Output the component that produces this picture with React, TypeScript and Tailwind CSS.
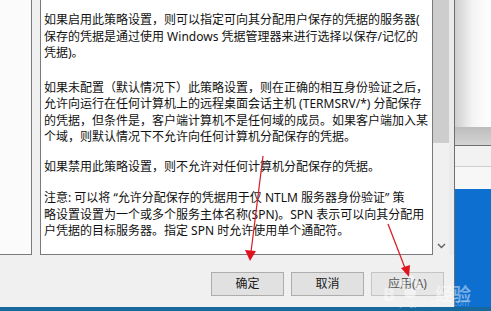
import React from 'react';

const paragraphs: { gap: number; lines: string[] }[] = [
  {
    gap: 12,
    lines: [
      '如果启用此策略设置，则可以指定可向其分配用户保存的凭据的服务器(',
      '保存的凭据是通过使用 Windows 凭据管理器来进行选择以保存/记忆的',
      '凭据)。',
    ],
  },
  {
    gap: 18,
    lines: [
      '如果未配置（默认情况下）此策略设置，则在正确的相互身份验证之后，',
      '允许向运行在任何计算机上的远程桌面会话主机 (TERMSRV/*) 分配保存',
      '的凭据，但条件是，客户端计算机不是任何域的成员。如果客户端加入某',
      '个域，则默认情况下不允许向任何计算机分配保存的凭据。',
    ],
  },
  {
    gap: 13,
    lines: ['如果禁用此策略设置，则不允许对任何计算机分配保存的凭据。'],
  },
  {
    gap: 15,
    lines: [
      '注意: 可以将 “允许分配保存的凭据用于仅 NTLM 服务器身份验证” 策',
      '略设置设置为一个或多个服务主体名称(SPN)。SPN 表示可以向其分配用',
      '户凭据的目标服务器。指定 SPN 时允许使用单个通配符。',
    ],
  },
];

function DialogButton({ label, disabled }: { label: string; disabled?: boolean }) {
  return (
    <button
      className={
        disabled
          ? 'w-[73px] h-[24px] border border-[#c4c4c4] bg-[#e6e6e6] text-[12px] text-[#555]'
          : 'w-[73px] h-[24px] border border-[#adadad] bg-[#e1e1e1] text-[12px] text-[#1a1a1a]'
      }
    >
      {label}
    </button>
  );
}

export default function App() {
  return (
    <div
      className="relative w-[491px] h-[311px] overflow-hidden flex flex-col bg-[#f0f0f0]"
      style={{ fontFamily: '"Noto Sans", "Noto Sans CJK SC", sans-serif' }}
    >
      <div className="flex h-[307px]">
        {/* property dialog */}
        <div className="w-[455px] flex flex-col bg-[#f0f0f0] border-r border-[#6e6e6e]">
          <div className="flex h-[255px]">
            <div className="w-[32px] bg-[#fbfbfb] border-r border-b border-[#7a7a7a]" />
            <div className="w-[8px]" />
            <div className="w-[393px] bg-white border-x border-b border-[#7a7a7a] pl-[3px] text-[12px] leading-[16.5px] text-[#111]">
              {paragraphs.map((p, i) => (
                <div key={i} style={{ marginTop: p.gap }}>
                  {p.lines.map((line, j) => (
                    <div key={j} className="whitespace-nowrap">
                      {line}
                    </div>
                  ))}
                </div>
              ))}
            </div>
            <div className="w-[16px] flex flex-col bg-[#f0f0f0]">
              <div className="h-[143px] bg-[#cdcdcd]" />
              <div className="flex-1" />
              <div className="h-[16px] flex items-center justify-center mb-[1px]">
                <svg width="9" height="6" viewBox="0 0 9 6">
                  <path d="M1 1 L4.5 4.5 L8 1" fill="none" stroke="#606060" strokeWidth="1.4" />
                </svg>
              </div>
            </div>
            <div className="flex-1 bg-[#ebebeb]" />
          </div>
          <div className="flex justify-end gap-[7px] pt-[17px] pr-[10px]">
            <DialogButton label="确定" />
            <DialogButton label="取消" />
            <DialogButton label="应用(A)" disabled />
          </div>
        </div>

        {/* windows behind */}
        <div className="flex-1 flex flex-col">
          <div className="h-[127px] bg-gradient-to-r from-[#cfcfcf] via-[#f4f4f4] to-white" />
          <div className="h-[19px] bg-gradient-to-b from-[#bdbdbd] to-[#d4d4d4] border-b border-[#6f6f6f]" />
          <div className="h-[21px] bg-[#f2f2f2] border-b border-[#cfcfcf]" />
          <div className="h-[22px] bg-[#f7f7f7]" />
          <div className="flex-1 bg-[#0d6fd0]" />
        </div>
      </div>
      <div className="flex-1 bg-[#17689d]" />

      {/* red annotation arrows */}
      <svg className="absolute left-0 top-0" width="491" height="311" viewBox="0 0 491 311">
        <line x1="263" y1="156" x2="251" y2="252" stroke="#d8232a" strokeWidth="1.3" />
        <polygon points="245,250 256,251 250,261" fill="#e0141e" />
        <line x1="388" y1="224" x2="405" y2="268" stroke="#d8232a" strokeWidth="1.3" />
        <polygon points="401,268 410,265 409,277" fill="#e0141e" />
      </svg>

      {/* watermark */}
      <div className="absolute left-[383px] top-[275px] flex items-end text-white/45 font-bold text-[18px] leading-none">
        <span>B</span>
        <svg width="30" height="26" viewBox="0 0 30 26" className="mb-[2px] opacity-50">
          <ellipse cx="8" cy="8" rx="3" ry="4" fill="#fff" />
          <ellipse cx="16" cy="4" rx="3" ry="4" fill="#fff" />
          <ellipse cx="23" cy="10" rx="3" ry="4" fill="#fff" />
          <ellipse cx="15" cy="18" rx="6" ry="5" fill="#fff" />
        </svg>
        <span className="ml-[10px]">经验</span>
      </div>
      <div className="absolute left-[400px] top-[299px] text-[8px] leading-none text-white/35">
        jingyan.baidu.com
      </div>
    </div>
  );
}
